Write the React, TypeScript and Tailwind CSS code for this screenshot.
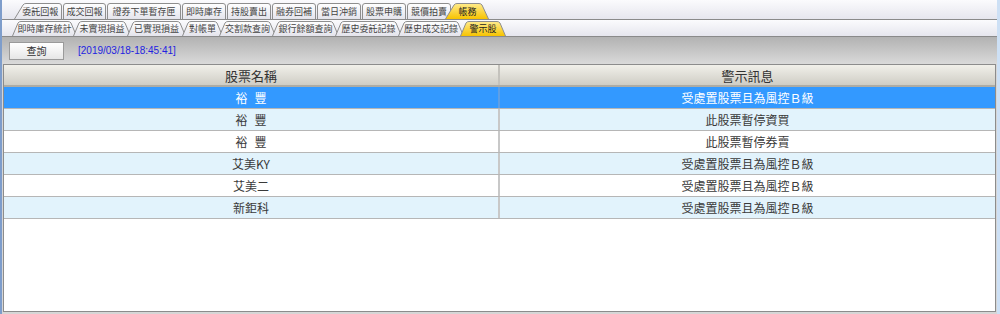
import React from 'react';

type TabDef = { label: string; w: number; ls?: number; rs?: number; active?: boolean };

function TabBg({ w, h, ls = 0, rs = 0, active, id }: { w: number; h: number; ls?: number; rs?: number; active?: boolean; id: string }) {
  const t = 0.5;
  let d = '';
  if (ls > 0) d += `M0.5 ${h} L${ls} ${t + 1.5} Q${ls + 1} ${t} ${ls + 3} ${t}`;
  else d += `M0.5 ${h} L0.5 ${t + 2.5} Q0.5 ${t} 3 ${t}`;
  if (rs > 0) d += ` L${w - rs - 3} ${t} Q${w - rs - 1} ${t} ${w - rs} ${t + 1.5} L${w - 0.5} ${h}`;
  else d += ` L${w - 3} ${t} Q${w - 0.5} ${t} ${w - 0.5} ${t + 2.5} L${w - 0.5} ${h}`;
  return (
    <svg className="absolute inset-0" width={w} height={h} viewBox={`0 0 ${w} ${h}`}>
      <defs>
        <linearGradient id={id} x1="0" y1="0" x2="0" y2="1">
          {active ? (
            <>
              <stop offset="0" stopColor="#ffeb8c" />
              <stop offset="1" stopColor="#f7c300" />
            </>
          ) : (
            <>
              <stop offset="0" stopColor="#ffffff" />
              <stop offset="1" stopColor="#e4e4ec" />
            </>
          )}
        </linearGradient>
      </defs>
      <path d={d} fill={`url(#${id})`} stroke="#8e8e8e" strokeWidth="1" />
    </svg>
  );
}

function Tab({ t, h, id, className }: { t: TabDef; h: number; id: string; className?: string }) {
  return (
    <div
      className={`relative flex items-center justify-center shrink-0 ${t.active ? 'z-10' : ''} ${className ?? ''}`}
      style={{ width: t.w, height: h, paddingLeft: t.ls ? t.ls / 2 : 0, paddingRight: t.rs ? t.rs / 2 : 0 }}
    >
      <TabBg w={t.w} h={h} ls={t.ls} rs={t.rs} active={t.active} id={id} />
      <span className={`relative text-[9px] leading-none whitespace-nowrap ${t.active ? 'text-[#222]' : 'text-[#444]'}`}>
        {t.label}
      </span>
    </div>
  );
}

const row1: TabDef[] = [
  { label: '委託回報', w: 48, ls: 9 },
  { label: '成交回報', w: 43 },
  { label: '證券下單暫存匣', w: 74 },
  { label: '即時庫存', w: 44 },
  { label: '持股賣出', w: 44 },
  { label: '融券回補', w: 44 },
  { label: '當日沖銷', w: 44 },
  { label: '股票申購', w: 44 },
  { label: '競價拍賣', w: 44 },
  { label: '帳務', w: 44, ls: 9, rs: 7, active: true },
];

const row2: TabDef[] = [
  { label: '即時庫存統計', w: 65, ls: 6, rs: 6 },
  { label: '未實現損益', w: 58, ls: 6, rs: 6 },
  { label: '已實現損益', w: 59, ls: 6, rs: 6 },
  { label: '對帳單', w: 41, ls: 6, rs: 6 },
  { label: '交割款查詢', w: 57, ls: 6, rs: 6 },
  { label: '銀行餘額查詢', w: 67, ls: 6, rs: 6 },
  { label: '歷史委託記錄', w: 67, ls: 6, rs: 6 },
  { label: '歷史成交記錄', w: 66, ls: 6, rs: 6 },
  { label: '警示股', w: 46, ls: 6, rs: 6, active: true },
];

type Row = { name: React.ReactNode; msg: string };
const Space = () => <span className="inline-block w-[7px]"> </span>;

const rows: Row[] = [
  { name: <>裕<Space />豐</>, msg: '受處置股票且為風控Ｂ級' },
  { name: <>裕<Space />豐</>, msg: '此股票暫停資買' },
  { name: <>裕<Space />豐</>, msg: '此股票暫停券賣' },
  { name: '艾美KY', msg: '受處置股票且為風控Ｂ級' },
  { name: '艾美二', msg: '受處置股票且為風控Ｂ級' },
  { name: '新鉅科', msg: '受處置股票且為風控Ｂ級' },
];

export default function App() {
  return (
    <div className="w-[1000px] h-[314px] overflow-hidden flex flex-col bg-[#d6d6d6] border-l-2 border-l-[#7e9dcb] border-r-[3px] border-r-[#cde0f5] font-['Noto_Sans_CJK_TC','Noto_Sans_CJK_SC',sans-serif]">
      {/* tab row 1 */}
      <div className="h-[20px] shrink-0 flex items-end pl-[12px] border-b border-[#8a8a8a] bg-gradient-to-b from-[#fbfbfd] to-[#e6e6ee]">
        {row1.map((t, i) => (
          <Tab key={i} t={t} h={16} id={`r1-${i}`} className={i === 0 ? '' : t.active ? '-ml-[6px]' : 'ml-[1px]'} />
        ))}
      </div>
      {/* tab row 2 */}
      <div className="h-[17px] shrink-0 flex items-end pl-[10px] border-b border-[#8a8a8a] bg-gradient-to-b from-[#fbfbfd] to-[#e6e6ee]">
        {row2.map((t, i) => (
          <Tab key={i} t={t} h={15} id={`r2-${i}`} className={i === 0 ? '' : '-ml-[4px]'} />
        ))}
      </div>
      {/* toolbar */}
      <div className="h-[27px] shrink-0 flex items-center bg-gradient-to-b from-[#b2b2b2] to-[#dadada]">
        <button className="ml-[7px] w-[55px] h-[18px] flex items-center justify-center border border-[#9a9a9a] bg-gradient-to-b from-[#ffffff] to-[#e6e6e6] text-[10px] leading-none text-[#333]">
          查詢
        </button>
        <span className="ml-[14px] text-[10px] leading-none text-[#2323e0] font-['Liberation_Sans',sans-serif]">
          [2019/03/18-18:45:41]
        </span>
      </div>
      {/* table */}
      <div className="mx-[1px] h-[248px] shrink-0 flex flex-col border border-[#8c8c8c] bg-white">
        <div className="h-[22px] shrink-0 flex border-b-2 border-[#aeaca4] bg-gradient-to-b from-[#f1f0ea] to-[#cfcdc5] text-[13px] text-[#333]">
          <div className="w-[496px] shrink-0 border-r-2 border-[#c4c2bc] flex items-center justify-center leading-none">股票名稱</div>
          <div className="flex-1 flex items-center justify-center leading-none">警示訊息</div>
        </div>
        {rows.map((r, i) => {
          const sel = i === 0;
          const bg = sel ? 'bg-[#3399ff] text-white' : i % 2 === 1 ? 'bg-[#e2f3fc] text-[#3a3a3a]' : 'bg-white text-[#3a3a3a]';
          return (
            <div key={i} className={`h-[22px] shrink-0 flex border-b border-[#b6b6b6] text-[12px] ${bg}`}>
              <div className={`w-[496px] shrink-0 border-r-2 flex items-center justify-center leading-none ${sel ? 'border-[#5e9fe6]' : 'border-[#c8c8c8]'}`}>
                {r.name}
              </div>
              <div className="flex-1 flex items-center justify-center leading-none">{r.msg}</div>
            </div>
          );
        })}
      </div>
    </div>
  );
}
